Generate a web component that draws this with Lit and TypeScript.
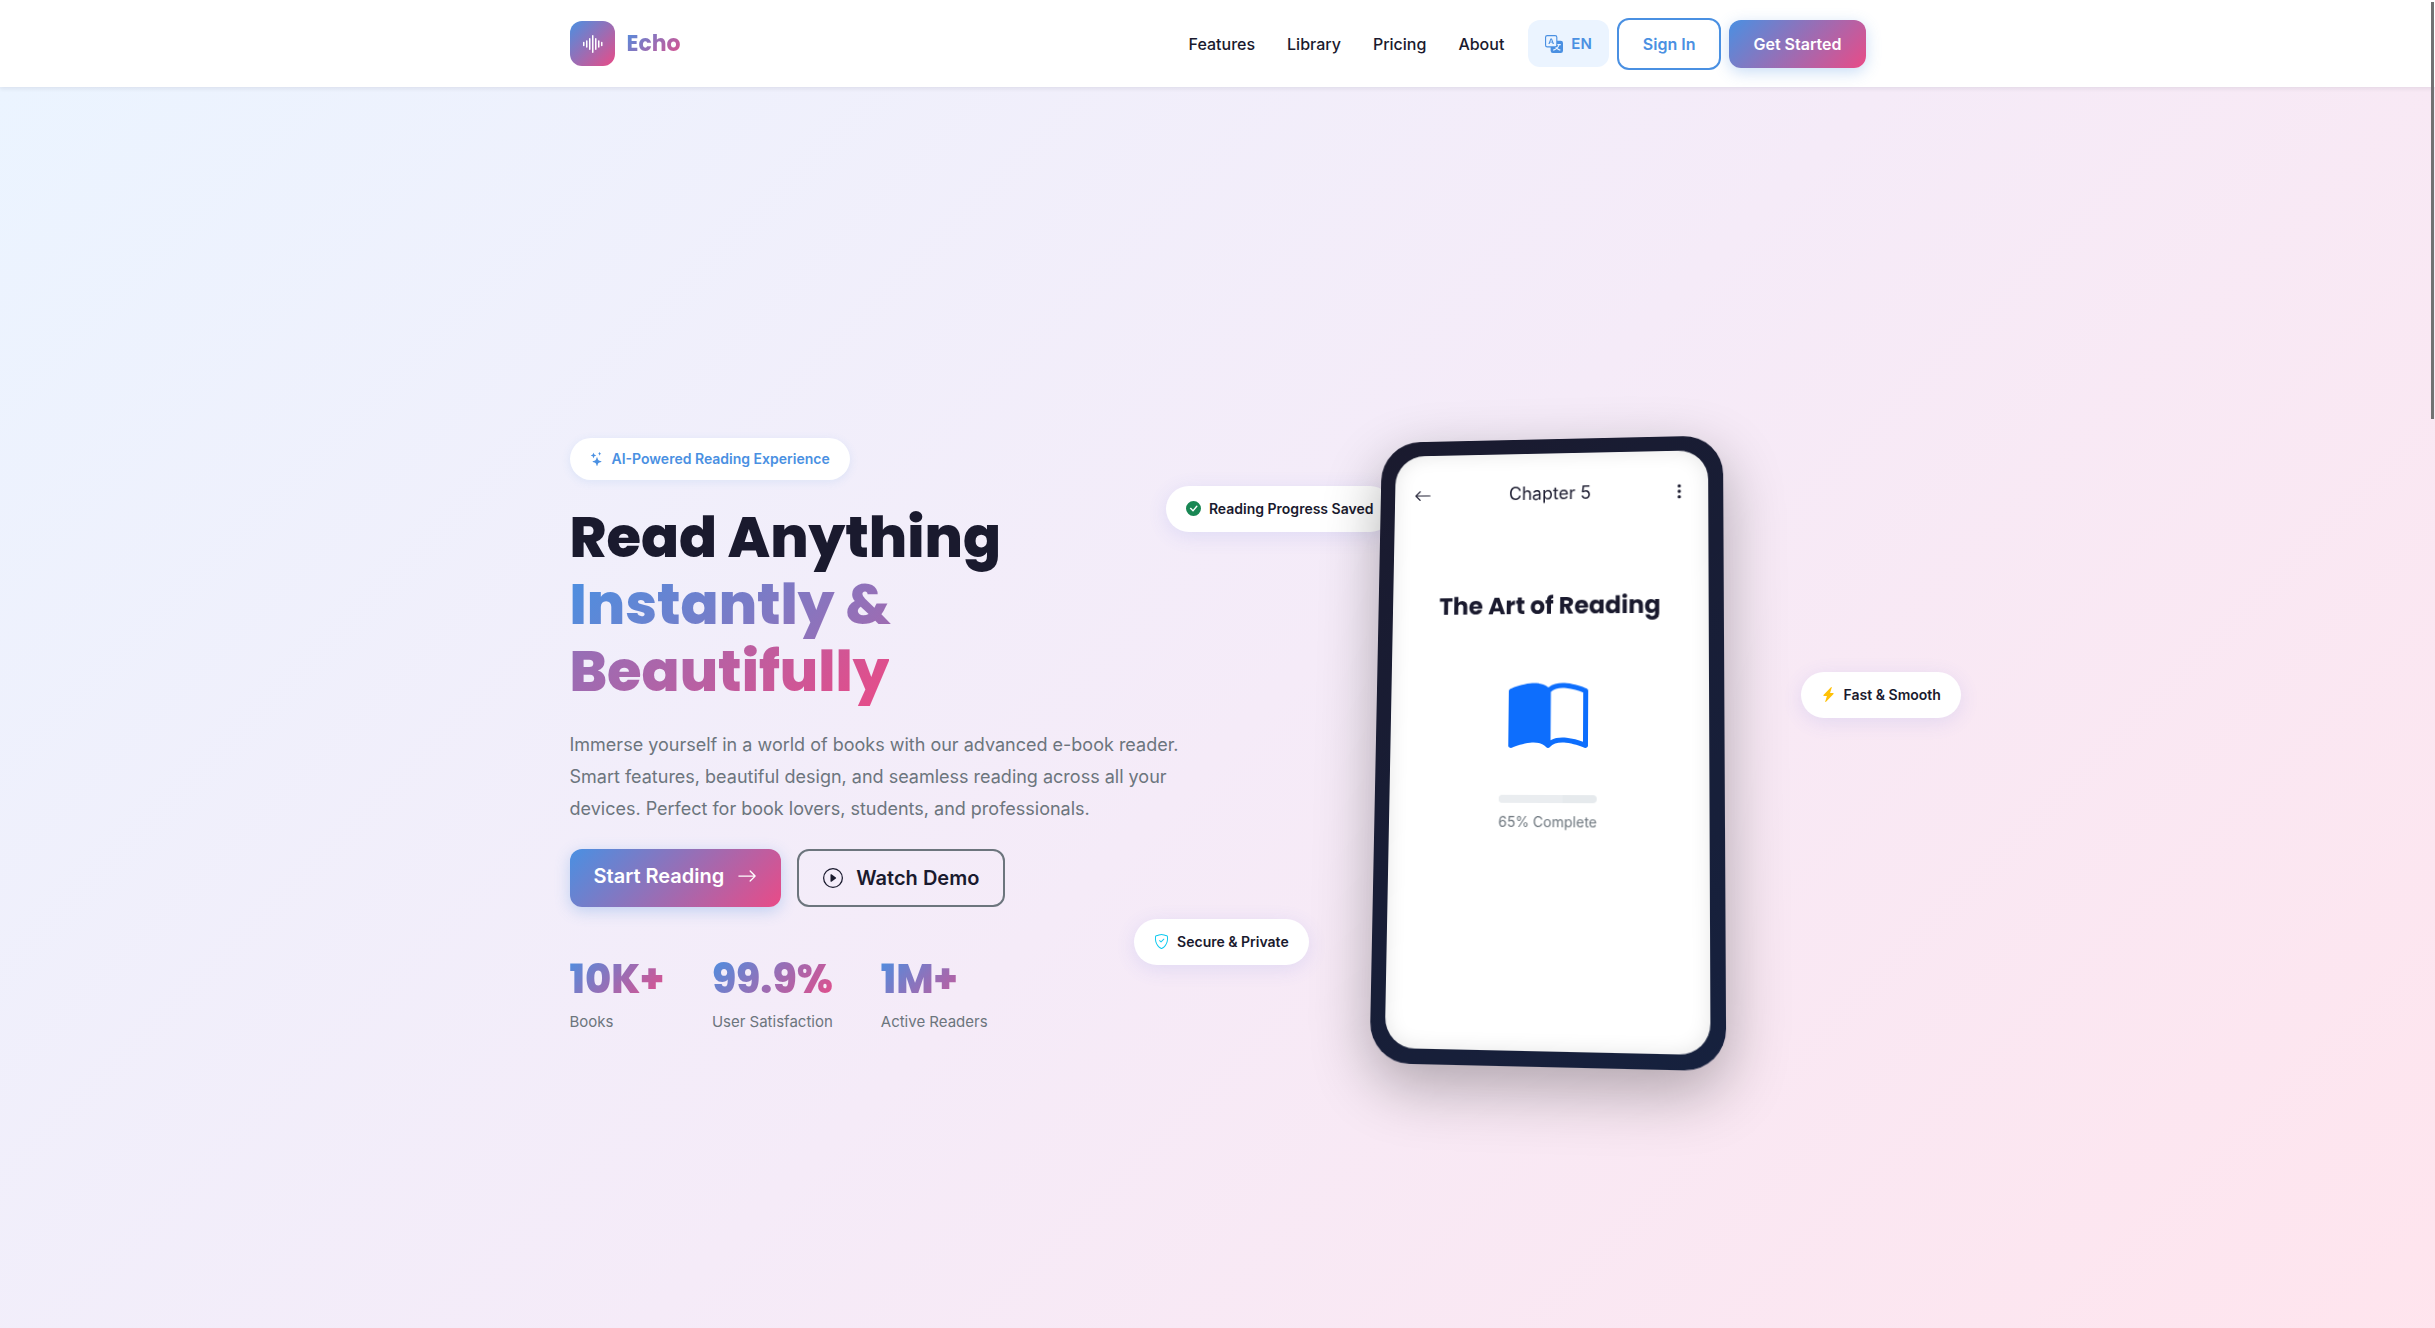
import { LitElement, html, css, svg } from "lit";
import { customElement, property } from "lit/decorators.js";

const ICONS: Record<string, string[]> = {
  soundwave: [
    "M8.5 2a.5.5 0 0 1 .5.5v11a.5.5 0 0 1-1 0v-11a.5.5 0 0 1 .5-.5m-2 2a.5.5 0 0 1 .5.5v7a.5.5 0 0 1-1 0v-7a.5.5 0 0 1 .5-.5m4 0a.5.5 0 0 1 .5.5v7a.5.5 0 0 1-1 0v-7a.5.5 0 0 1 .5-.5m-6 1.5A.5.5 0 0 1 5 6v4a.5.5 0 0 1-1 0V6a.5.5 0 0 1 .5-.5m8 0a.5.5 0 0 1 .5.5v4a.5.5 0 0 1-1 0V6a.5.5 0 0 1 .5-.5m-10 1A.5.5 0 0 1 3 7v2a.5.5 0 0 1-1 0V7a.5.5 0 0 1 .5-.5m12 0a.5.5 0 0 1 .5.5v2a.5.5 0 0 1-1 0V7a.5.5 0 0 1 .5-.5",
  ],
  translate: [
    "M4.545 6.714 4.11 8H3l1.862-5h1.284L8 8H6.833l-.435-1.286zm1.634-.736L5.5 3.956h-.049l-.679 2.022z",
    "M0 2a2 2 0 0 1 2-2h7a2 2 0 0 1 2 2v3h3a2 2 0 0 1 2 2v7a2 2 0 0 1-2 2H7a2 2 0 0 1-2-2v-3H2a2 2 0 0 1-2-2zm2-1a1 1 0 0 0-1 1v7a1 1 0 0 0 1 1h7a1 1 0 0 0 1-1V2a1 1 0 0 0-1-1zm7.138 9.995q.289.451.63.846c-.748.575-1.673 1.001-2.768 1.292.178.217.451.635.555.867 1.125-.359 2.08-.844 2.886-1.494.777.665 1.739 1.165 2.93 1.472.133-.254.414-.673.629-.89-1.125-.253-2.057-.694-2.82-1.284.681-.747 1.222-1.651 1.621-2.757H14V8h-3v1.047h.765c-.318.844-.74 1.546-1.272 2.13a6 6 0 0 1-.415-.492 2 2 0 0 1-.94.31",
  ],
  stars: [
    "M7.657 6.247c.11-.33.576-.33.686 0l.645 1.937a2.89 2.89 0 0 0 1.829 1.828l1.936.645c.33.11.33.576 0 .686l-1.937.645a2.89 2.89 0 0 0-1.828 1.829l-.645 1.936a.361.361 0 0 1-.686 0l-.645-1.937a2.89 2.89 0 0 0-1.828-1.828l-1.937-.645a.361.361 0 0 1 0-.686l1.937-.645a2.89 2.89 0 0 0 1.828-1.828zM3.794 1.148a.217.217 0 0 1 .412 0l.387 1.162c.173.518.579.924 1.097 1.097l1.162.387a.217.217 0 0 1 0 .412l-1.162.387A1.73 1.73 0 0 0 4.593 5.69l-.387 1.162a.217.217 0 0 1-.412 0L3.407 5.69A1.73 1.73 0 0 0 2.31 4.593l-1.162-.387a.217.217 0 0 1 0-.412l1.162-.387A1.73 1.73 0 0 0 3.407 2.31zM10.863.099a.145.145 0 0 1 .274 0l.258.774c.115.346.386.617.732.732l.774.258a.145.145 0 0 1 0 .274l-.774.258a1.16 1.16 0 0 0-.732.732l-.258.774a.145.145 0 0 1-.274 0l-.258-.774a1.16 1.16 0 0 0-.732-.732L9.1 2.137a.145.145 0 0 1 0-.274l.774-.258c.346-.115.617-.386.732-.732z",
  ],
  "arrow-right": [
    "M1 8a.5.5 0 0 1 .5-.5h11.793l-3.147-3.146a.5.5 0 0 1 .708-.708l4 4a.5.5 0 0 1 0 .708l-4 4a.5.5 0 0 1-.708-.708L13.293 8.5H1.5A.5.5 0 0 1 1 8",
  ],
  "arrow-left": [
    "M15 8a.5.5 0 0 0-.5-.5H2.707l3.147-3.146a.5.5 0 1 0-.708-.708l-4 4a.5.5 0 0 0 0 .708l4 4a.5.5 0 0 0 .708-.708L2.707 8.5H14.5A.5.5 0 0 0 15 8",
  ],
  "play-circle": [
    "M8 15A7 7 0 1 1 8 1a7 7 0 0 1 0 14m0 1A8 8 0 1 0 8 0a8 8 0 0 0 0 16",
    "M6.271 5.055a.5.5 0 0 1 .52.038l3.5 2.5a.5.5 0 0 1 0 .814l-3.5 2.5A.5.5 0 0 1 6 10.5v-5a.5.5 0 0 1 .271-.445",
  ],
  dots: [
    "M9.5 13a1.5 1.5 0 1 1-3 0 1.5 1.5 0 0 1 3 0m0-5a1.5 1.5 0 1 1-3 0 1.5 1.5 0 0 1 3 0m0-5a1.5 1.5 0 1 1-3 0 1.5 1.5 0 0 1 3 0",
  ],
  book: [
    "M8.5 2.687c.654-.689 1.782-.886 3.112-.752 1.234.124 2.503.523 3.388.893v9.923c-.918-.35-2.107-.692-3.287-.81-1.094-.111-2.278-.039-3.213.492zM8 1.783C7.015.936 5.587.81 4.287.94c-1.514.153-3.042.672-3.994 1.105A.5.5 0 0 0 0 2.5v11a.5.5 0 0 0 .707.455c.882-.4 2.303-.881 3.68-1.02 1.409-.142 2.59.087 3.223.877a.5.5 0 0 0 .78 0c.633-.79 1.814-1.019 3.222-.877 1.378.139 2.8.62 3.681 1.02A.5.5 0 0 0 16 13.5v-11a.5.5 0 0 0-.293-.455c-.952-.433-2.48-.952-3.994-1.105C10.413.809 8.985.936 8 1.783",
  ],
  check: [
    "M16 8A8 8 0 1 1 0 8a8 8 0 0 1 16 0m-3.97-3.03a.75.75 0 0 0-1.08.022L7.477 9.417 5.384 7.323a.75.75 0 0 0-1.06 1.06L6.97 11.03a.75.75 0 0 0 1.079-.02l3.992-4.99a.75.75 0 0 0-.01-1.05z",
  ],
  lightning: [
    "M11.251.068a.5.5 0 0 1 .227.58L9.677 6.5H13a.5.5 0 0 1 .364.843l-8 8.5a.5.5 0 0 1-.842-.49L6.323 9.5H3a.5.5 0 0 1-.364-.843l8-8.5a.5.5 0 0 1 .615-.09z",
  ],
  shield: [
    "M5.338 1.59a61 61 0 0 0-2.837.856.48.48 0 0 0-.328.39c-.554 4.157.726 7.19 2.253 9.188a10.7 10.7 0 0 0 2.287 2.233c.346.244.652.42.893.533q.18.085.293.118a1 1 0 0 0 .101.025 1 1 0 0 0 .1-.025q.114-.034.294-.118c.24-.113.547-.29.893-.533a10.7 10.7 0 0 0 2.287-2.233c1.527-1.997 2.807-5.031 2.253-9.188a.48.48 0 0 0-.328-.39c-.651-.213-1.75-.56-2.837-.855C9.552 1.29 8.531 1.067 8 1.067c-.53 0-1.552.223-2.662.524zM5.072.56C6.157.265 7.31 0 8 0s1.843.265 2.928.56c1.11.3 2.229.655 2.887.87a1.54 1.54 0 0 1 1.044 1.262c.596 4.477-.787 7.795-2.465 9.99a11.8 11.8 0 0 1-2.517 2.453 7 7 0 0 1-1.048.625c-.28.132-.581.24-.829.24s-.548-.108-.829-.24a7 7 0 0 1-1.048-.625 11.8 11.8 0 0 1-2.517-2.453C1.928 10.487.545 7.169 1.141 2.692A1.54 1.54 0 0 1 2.185 1.43 63 63 0 0 1 5.072.56",
    "M10.854 5.146a.5.5 0 0 1 0 .708l-3 3a.5.5 0 0 1-.708 0l-1.5-1.5a.5.5 0 1 1 .708-.708L7.5 7.793l2.646-2.647a.5.5 0 0 1 .708 0",
  ],
};

@customElement("echo-icon")
class EchoIcon extends LitElement {
  @property() name = "";

  static styles = css`
    :host {
      display: inline-block;
      flex: none;
      width: 1em;
      height: 1em;
    }
    svg {
      display: block;
      width: 100%;
      height: 100%;
      fill: currentColor;
    }
  `;

  render() {
    return html`<svg viewBox="0 0 16 16" aria-hidden="true">
      ${(ICONS[this.name] ?? []).map((d) => svg`<path d=${d}></path>`)}
    </svg>`;
  }
}

@customElement("echo-header")
class EchoHeader extends LitElement {
  static styles = css`
    :host {
      display: block;
      position: relative;
      z-index: 2;
      background: #fff;
      box-shadow: 0 2px 4px rgba(26, 26, 46, 0.08);
    }
    .bar {
      box-sizing: border-box;
      max-width: 1320px;
      min-height: 87px;
      margin: 0 auto;
      padding: 0 12px;
      display: flex;
      align-items: center;
      justify-content: space-between;
    }
    a {
      color: inherit;
      text-decoration: none;
    }
    .brand {
      display: flex;
      align-items: center;
      gap: 12px;
      font: 700 22px/36px Poppins, "Open Sans", sans-serif;
    }
    .mark {
      display: grid;
      place-items: center;
      width: 45px;
      height: 45px;
      border-radius: 12px;
      font-size: 24px;
      color: #fff;
      background: var(--brand);
    }
    .name {
      background: var(--brand);
      -webkit-background-clip: text;
      background-clip: text;
      color: transparent;
    }
    .nav,
    .actions {
      display: flex;
      align-items: center;
    }
    .nav {
      font-weight: 500;
    }
    .link {
      padding: 8px 16px;
    }
    .actions {
      gap: 8px;
    }
    .lang,
    .btn {
      font: 600 16px/24px Inter, sans-serif;
      border-radius: 12px;
    }
    .lang {
      display: flex;
      align-items: center;
      gap: 8px;
      min-height: 47px;
      padding: 0 17px;
      border: 0;
      font-size: 15px;
      color: #4a90e2;
      background: #ebf4ff;
    }
    .lang echo-icon {
      font-size: 18px;
    }
    .btn {
      padding: 12px 24px;
    }
    .outline {
      border: 2px solid #4a90e2;
      color: #4a90e2;
    }
    .solid {
      color: #fff;
      background: var(--brand);
      box-shadow: 0 4px 15px rgba(74, 144, 226, 0.3);
    }
  `;

  render() {
    const links = ["Features", "Library", "Pricing", "About"];
    return html`<header class="bar">
      <a class="brand" href="#">
        <span class="mark"><echo-icon name="soundwave"></echo-icon></span>
        <span class="name">Echo</span>
      </a>
      <div class="actions">
        <nav class="nav">
          ${links.map((l) => html`<a class="link" href="#${l.toLowerCase()}">${l}</a>`)}
        </nav>
        <button class="lang" type="button"><echo-icon name="translate"></echo-icon>EN</button>
        <a class="btn outline" href="#signin">Sign In</a>
        <a class="btn solid" href="#start">Get Started</a>
      </div>
    </header>`;
  }
}

@customElement("echo-intro")
class EchoIntro extends LitElement {
  static styles = css`
    :host {
      display: block;
      padding-bottom: 20px;
    }
    .badge {
      display: inline-flex;
      align-items: center;
      gap: 8px;
      padding: 10px 20px;
      border-radius: 24px;
      font-size: 14px;
      line-height: 22px;
      font-weight: 600;
      color: #4a90e2;
      background: #fff;
      box-shadow: 0 2px 10px rgba(74, 144, 226, 0.12);
      vertical-align: top;
    }
    h1 {
      margin: 24px 0;
      font: 800 56px/67px Poppins, "Open Sans", sans-serif;
    }
    .gradient {
      background: var(--brand);
      -webkit-background-clip: text;
      background-clip: text;
      color: transparent;
    }
    p {
      margin: 0 0 24px;
      font-size: 18px;
      line-height: 32px;
      color: #6c757d;
    }
    .cta {
      display: flex;
      flex-wrap: wrap;
      gap: 16px;
      margin-bottom: 48px;
      font-size: 20px;
      line-height: 30px;
    }
    a {
      display: flex;
      align-items: center;
      gap: 13px;
      padding: 12px 24px;
      border-radius: 12px;
      font-weight: 600;
      text-decoration: none;
    }
    .primary {
      align-items: flex-start;
      color: #fff;
      background: var(--brand);
      box-shadow: 0 4px 15px rgba(74, 144, 226, 0.3);
    }
    .primary echo-icon {
      margin-top: 5px;
    }
    .secondary {
      border: 2px solid #6c757d;
      color: #1a1a2e;
    }
    .stats {
      display: flex;
      gap: 48px;
      margin: 0;
    }
    .stat {
      display: flex;
      flex-direction: column-reverse;
      gap: 7px;
    }
    dt {
      font-size: 15px;
      line-height: 24px;
      color: #6c757d;
    }
    dd {
      margin: 0;
      font: 800 40px/48px Poppins, "Open Sans", sans-serif;
    }
  `;

  render() {
    const stats = [
      ["10K+", "Books"],
      ["99.9%", "User Satisfaction"],
      ["1M+", "Active Readers"],
    ];
    return html`
      <span class="badge"><echo-icon name="stars"></echo-icon>AI-Powered Reading Experience</span>
      <h1>Read Anything<br /><span class="gradient">Instantly &amp;<br />Beautifully</span></h1>
      <p>
        Immerse yourself in a world of books with our advanced e-book reader. Smart features,
        beautiful design, and seamless reading across all your devices. Perfect for book lovers,
        students, and professionals.
      </p>
      <div class="cta">
        <a class="primary" href="#start">Start Reading<echo-icon name="arrow-right"></echo-icon></a>
        <a class="secondary" href="#demo"><echo-icon name="play-circle"></echo-icon>Watch Demo</a>
      </div>
      <dl class="stats">
        ${stats.map(
          ([value, label]) => html`<div class="stat">
            <dt>${label}</dt>
            <dd class="gradient">${value}</dd>
          </div>`
        )}
      </dl>
    `;
  }
}

@customElement("echo-phone")
class EchoPhone extends LitElement {
  @property({ type: Number }) progress = 65;

  static styles = css`
    :host {
      display: block;
      position: relative;
    }
    .phone {
      position: relative;
      z-index: 1;
      box-sizing: border-box;
      width: 350px;
      margin: 0 auto;
      padding: 15px;
      border-radius: 40px;
      background: linear-gradient(135deg, #1a1a2e, #16213e);
      box-shadow: 0 20px 60px rgba(0, 0, 0, 0.3);
      transform: perspective(1200px) rotateY(-5deg) rotateX(5deg);
    }
    .screen {
      box-sizing: border-box;
      min-height: 600px;
      padding: 30px 20px;
      border-radius: 30px;
      background: #fff;
      box-shadow: inset 0 0 20px rgba(0, 0, 0, 0.1);
    }
    .top {
      display: flex;
      justify-content: space-between;
      align-items: center;
      font-size: 18px;
      line-height: 24px;
    }
    .icon-btn {
      display: flex;
      padding: 0;
      border: 0;
      background: none;
      color: inherit;
      font-size: 18px;
    }
    .page {
      display: flex;
      flex-direction: column;
      align-items: center;
      padding-top: 89px;
    }
    h2 {
      margin: 0 0 59px;
      font: 700 24px/30px Poppins, "Open Sans", sans-serif;
    }
    .book {
      font-size: 80px;
      color: #0d6efd;
    }
    .status {
      display: flex;
      flex-direction: column;
      gap: 8px;
      margin-top: 37px;
      font-size: 14px;
      line-height: 22px;
      color: #6c757d;
    }
    .track {
      height: 8px;
      border-radius: 4px;
      overflow: hidden;
      background: #e6eaed;
    }
    .fill {
      height: 100%;
      background: #eaedf0;
    }
    .float {
      position: absolute;
      display: flex;
      align-items: center;
      gap: 8px;
      padding: 12px 20px;
      border-radius: 24px;
      font-size: 14px;
      line-height: 22px;
      font-weight: 600;
      white-space: nowrap;
      background: #fff;
      box-shadow: 0 4px 20px rgba(74, 90, 226, 0.12);
    }
    .float echo-icon {
      font-size: 15px;
    }
    .saved {
      top: 55px;
      left: -10%;
    }
    .saved echo-icon {
      color: #198754;
    }
    .fast {
      top: 241px;
      right: -15%;
    }
    .fast echo-icon {
      color: #ffc107;
    }
    .secure {
      bottom: 96px;
      left: -15%;
    }
    .secure echo-icon {
      color: #0dcaf0;
    }
  `;

  render() {
    return html`
      <div class="float saved"><echo-icon name="check"></echo-icon>Reading Progress Saved</div>
      <div class="float fast"><echo-icon name="lightning"></echo-icon>Fast &amp; Smooth</div>
      <div class="float secure"><echo-icon name="shield"></echo-icon>Secure &amp; Private</div>
      <div class="phone">
        <div class="screen">
          <div class="top">
            <button class="icon-btn" type="button" aria-label="Back">
              <echo-icon name="arrow-left"></echo-icon>
            </button>
            <span>Chapter 5</span>
            <button class="icon-btn" type="button" aria-label="Menu">
              <echo-icon name="dots"></echo-icon>
            </button>
          </div>
          <div class="page">
            <h2>The Art of Reading</h2>
            <echo-icon class="book" name="book"></echo-icon>
            <div class="status">
              <div class="track"><div class="fill" style="width:${this.progress}%"></div></div>
              <span>${this.progress}% Complete</span>
            </div>
          </div>
        </div>
      </div>
    `;
  }
}

@customElement("app-root")
class AppRoot extends LitElement {
  static styles = css`
    :host {
      --brand: linear-gradient(135deg, #4a90e2 0%, #e94b87 100%);
      display: block;
      position: relative;
      height: 100vh;
      overflow: hidden;
      font: 400 16px/24px Inter, sans-serif;
      color: #1a1a2e;
    }
    .hero {
      box-sizing: border-box;
      min-height: 100vh;
      padding-bottom: 11px;
      display: grid;
      align-items: center;
      background: linear-gradient(135deg, #ebf4ff 0%, #f5ebf8 50%, #ffe4ed 100%);
    }
    .row {
      box-sizing: border-box;
      width: 100%;
      max-width: 1320px;
      margin: 0 auto;
      padding: 0 12px;
      display: grid;
      grid-template-columns: 1fr 1fr;
      gap: 24px;
      align-items: center;
    }
    .scroll-thumb {
      position: absolute;
      z-index: 3;
      top: 2px;
      right: 1px;
      width: 3px;
      height: 417px;
      background: #727272;
    }
  `;

  render() {
    return html`
      <echo-header></echo-header>
      <main class="hero">
        <div class="row">
          <echo-intro></echo-intro>
          <echo-phone></echo-phone>
        </div>
      </main>
      <div class="scroll-thumb"></div>
    `;
  }
}
